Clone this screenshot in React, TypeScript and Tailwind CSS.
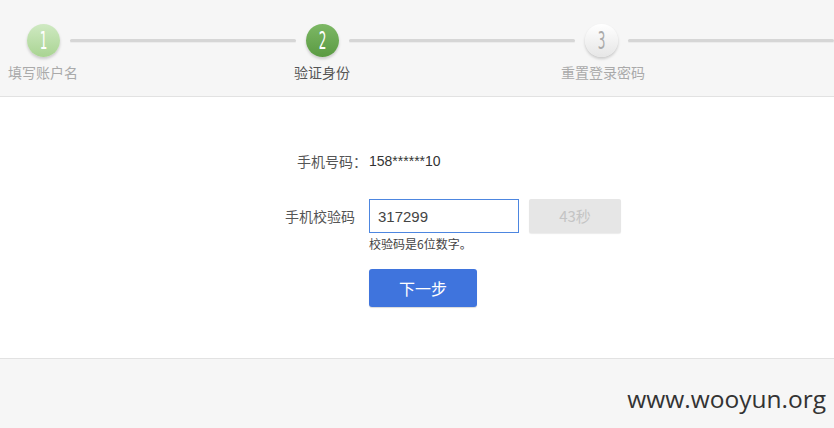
const cjk = { fontFamily: '"Noto Sans CJK SC", "Noto Sans", sans-serif' };

function StepCircle({ n, tone }: { n: number; tone: "done" | "active" | "todo" }) {
  const bg =
    tone === "done"
      ? "bg-gradient-to-b from-[#cfe9c2] to-[#a9d492] text-white"
      : tone === "active"
        ? "bg-gradient-to-b from-[#7db865] to-[#5a9a42] text-white"
        : "bg-gradient-to-b from-[#ffffff] to-[#e6e6e6] text-[#aaaaaa]";
  return (
    <div
      className={`flex h-[33px] w-[33px] shrink-0 items-center justify-center rounded-full shadow-[0_2px_3px_rgba(0,0,0,0.18)] ${bg}`}
    >
      <span
        className="inline-block scale-x-[0.5] text-[24px] leading-none"
        style={{ fontFamily: '"DejaVu Sans", sans-serif' }}
      >
        {n}
      </span>
    </div>
  );
}

function Line({ last }: { last?: boolean }) {
  return (
    <div
      className={`h-[3px] rounded-full bg-[#d6d6d6] shadow-[0_1px_0_#ececec] ${last ? "ml-[10px] flex-1" : "mx-[10px] w-[226px]"}`}
    />
  );
}

function StepLabel({ text, active, className }: { text: string; active?: boolean; className: string }) {
  return (
    <div
      className={`flex w-[80px] justify-center whitespace-nowrap ${active ? "text-[#555555]" : "text-[#aaaaaa]"} ${className}`}
    >
      {text}
    </div>
  );
}

export default function App() {
  return (
    <div className="h-[428px] w-[834px] overflow-hidden bg-[#f6f6f6]" style={cjk}>
      {/* steps */}
      <div className="h-[97px] border-b border-[#e2e2e2] bg-[#f6f6f6]">
        <div className="flex items-center pl-[27px] pt-[24px]">
          <StepCircle n={1} tone="done" />
          <Line />
          <StepCircle n={2} tone="active" />
          <Line />
          <StepCircle n={3} tone="todo" />
          <Line last />
        </div>
        <div className="mt-[5px] flex text-[14px] leading-[20px]">
          <StepLabel text="填写账户名" className="ml-[3px]" />
          <StepLabel text="验证身份" active className="ml-[199px]" />
          <StepLabel text="重置登录密码" className="ml-[201px]" />
        </div>
      </div>

      {/* form */}
      <div className="h-[262px] border-b border-[#e2e2e2] bg-white pt-[52px]">
        <div className="flex items-center text-[14px] leading-[24px]">
          <div className="w-[369px] pr-[2px] text-right text-[#555555]">手机号码：</div>
          <div className="text-[#333333]" style={{ fontFamily: '"Liberation Sans", Arial, sans-serif' }}>
            158******10
          </div>
        </div>

        <div className="mt-[26px] flex items-center">
          <div className="w-[369px] pr-[14px] text-right text-[14px] text-[#555555]">手机校验码</div>
          <input
            defaultValue="317299"
            className="h-[34px] w-[150px] border border-[#4d86e0] px-[8px] text-[15px] text-[#444444] outline-none"
            style={{ fontFamily: '"Liberation Sans", Arial, sans-serif' }}
          />
          <button className="ml-[10px] h-[34px] w-[92px] rounded-[2px] bg-[#e6e6e6] text-[15px] text-[#c4c4c4] shadow-[0_1px_1px_rgba(0,0,0,0.08)]">
            43秒
          </button>
        </div>

        <div className="ml-[369px] mt-[2px] text-[12px] leading-[18px] text-[#444444]">校验码是6位数字。</div>

        <button className="ml-[369px] mt-[16px] h-[38px] w-[108px] rounded-[3px] bg-[#3f74dd] text-[16px] text-white shadow-[0_1px_1px_rgba(0,0,0,0.15)]">
          下一步
        </button>
      </div>

      {/* footer watermark */}
      <div className="flex justify-end pr-[8px] pt-[24px]">
        <span
          className="text-[24.5px] leading-[32px] text-[#333333]"
          style={{ fontFamily: '"Open Sans", sans-serif' }}
        >
          www.wooyun.org
        </span>
      </div>
    </div>
  );
}
